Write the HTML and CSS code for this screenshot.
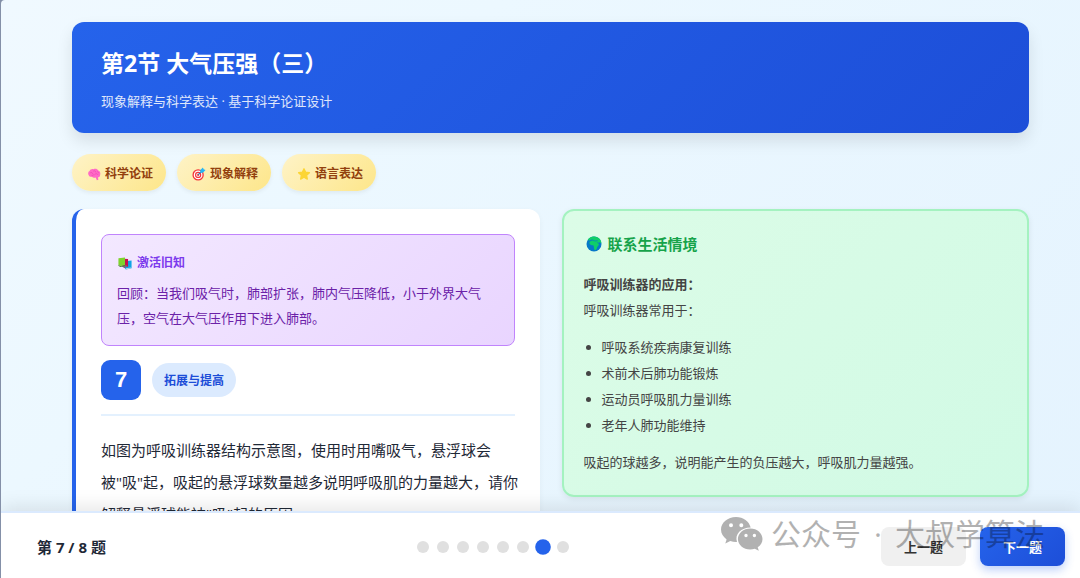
FILE: index.html
```html
<!DOCTYPE html>
<html lang="zh-CN">
<head>
<meta charset="utf-8">
<meta name="viewport" content="width=device-width, initial-scale=1">
<title>第2节 大气压强（三）</title>
<link rel="stylesheet" href="styles.css">
</head>
<body>
<div class="page">
  <main class="content">
    <header class="hero">
      <h1 class="hero-title">第2节 大气压强（三）</h1>
      <p class="hero-subtitle">现象解释与科学表达 · 基于科学论证设计</p>
    </header>

    <ul class="badges">
      <li class="badge">
        <svg class="icon icon-small" viewBox="0 0 16 16" aria-hidden="true">
          <path d="M2 9.500C.5 7.500 1.500 5 3 4.500 3.500 2.500 6 1.800 7.500 2.500 9.500 1.500 12 2.300 12.800 4 14.800 4.500 15.800 7 15 9c0 1.800-1.200 2.800-2.500 2.800l.5 2.700-1.700.5-1.500-3c-2 .8-3.300.3-4-.9-1.600.4-3.200-.1-3.800-1.600z" fill="#ff6ac6"/>
          <path d="M4 6.500c1.500-1 2.500.2 2.300 1.300M7.500 4.500c1.200-.6 2.300 0 2.500 1.200M9 8.500c1.200-1.400 2.900-1 3.500.2M5.500 10c1.200 0 2-.5 2.300-1.200M12 5.500l1.200 1" fill="none" stroke="#ee48b2" stroke-width=".8" stroke-linecap="round"/>
        </svg>
        科学论证
      </li>
      <li class="badge">
        <svg class="icon icon-small" viewBox="0 0 16 16" aria-hidden="true">
          <circle cx="7" cy="9" r="6.500" fill="#f5363c"/>
          <circle cx="7" cy="9" r="5" fill="#fff"/>
          <circle cx="7" cy="9" r="3.600" fill="#f5363c"/>
          <circle cx="7" cy="9" r="2.200" fill="#fff"/>
          <circle cx="7" cy="9" r="1.200" fill="#f5363c"/>
          <path d="M7 9l4-4" stroke="#2878b8" stroke-width="1.200"/>
          <path d="M9.500 6.500V3.500L12.500.5l.8 2.200 2.200.8-3 3z" fill="#26b5f5"/>
        </svg>
        现象解释
      </li>
      <li class="badge">
        <svg class="icon icon-small" viewBox="0 0 16 16" aria-hidden="true">
          <path d="M8 2l1.900 4 4.300.5-3.200 3 .8 4.300L8 11.700l-3.800 2.100.8-4.300-3.200-3L6.100 6z" fill="#fcd535" stroke="#fcd535" stroke-width="1.500" stroke-linejoin="round"/>
        </svg>
        语言表达
      </li>
    </ul>

    <div class="columns">
      <article class="question-card">
        <section class="review">
          <h2 class="review-title">
            <svg class="icon icon-small" viewBox="0 0 16 16" aria-hidden="true">
              <path d="M8 6l7.500-1v9L9 15.500 7 13z" fill="#0fa5e6"/>
              <path d="M9 14l6-1v1l-6 1.300z" fill="#b9d5e5"/>
              <path d="M6 3l5.500.5V12L7 13.300 5 11z" fill="#c50f4e"/>
              <path d="M4 11.500l6-.8.500 1.500L6 13z" fill="#736b80"/>
              <path d="M.5 2.500L8 1.800v8.700L2.500 11.500.5 10z" fill="#7ed32c"/>
              <path d="M.5 10l2 1.500L8 10.500v1l-5.500 1L.5 11z" fill="#477a30"/>
            </svg>
            激活旧知
          </h2>
          <p class="review-text">回顾：当我们吸气时，肺部扩张，肺内气压降低，小于外界大气压，空气在大气压作用下进入肺部。</p>
        </section>

        <div class="question-head">
          <span class="question-number">7</span>
          <span class="question-type">拓展与提高</span>
        </div>

        <p class="question-text">如图为呼吸训练器结构示意图，使用时用嘴吸气，悬浮球会<br>被"吸"起，吸起的悬浮球数量越多说明呼吸肌的力量越大，请你<br>解释悬浮球能被"吸"起的原因。</p>
      </article>

      <aside class="life-card">
        <h2 class="life-title">
          <svg class="icon icon-large" viewBox="0 0 16 16" aria-hidden="true">
            <circle cx="8" cy="8" r="7.500" fill="#0678c8"/>
            <path d="M3 2.300C6-.2 11-.3 14 3.200c1 1.400 1.300 2.600 1.400 4.300l-1.600-1.200-1.500.8.700 1.500c-.5 1.500-1.900 2-2.100 3.600-.4 1.400-1.500 2.200-2.400 1.500-.9-1.500-.2-3-1.200-4.500-1.800.2-3.500-.3-3.800-2C3.300 5.600 5 4.700 6.500 4.500l1-.8-2-.3L4 4.500 1.700 4z" fill="#0fce68"/>
            <path d="M6.800 4.400l2.300.6 2.600-.3M11.500 6l1 1.700" fill="none" stroke="#0678c8" stroke-width=".7"/>
          </svg>
          联系生活情境
        </h2>
        <div class="life-body">
          <p><strong>呼吸训练器的应用：</strong></p>
          <p>呼吸训练器常用于：</p>
          <ul class="life-list">
            <li>呼吸系统疾病康复训练</li>
            <li>术前术后肺功能锻炼</li>
            <li>运动员呼吸肌力量训练</li>
            <li>老年人肺功能维持</li>
          </ul>
          <p>吸起的球越多，说明能产生的负压越大，呼吸肌力量越强。</p>
        </div>
      </aside>
    </div>
  </main>

  <footer class="pager">
    <span class="pager-count">第 7 / 8 题</span>
    <div class="dots">
      <span class="dot"></span>
      <span class="dot"></span>
      <span class="dot"></span>
      <span class="dot"></span>
      <span class="dot"></span>
      <span class="dot"></span>
      <span class="dot dot-active"></span>
      <span class="dot"></span>
    </div>
    <div class="pager-actions">
      <button class="btn btn-prev" type="button">上一题</button>
      <button class="btn btn-next" type="button">下一题</button>
    </div>
    <div class="watermark">
      <svg class="watermark-logo" viewBox="0 0 42 34" aria-hidden="true">
        <path fill-rule="evenodd" d="M15 0C6.700 0 0 5.600 0 12.600c0 4 2.200 7.500 5.600 9.800L4.300 26.600l5-2.500c1.800.6 3.700 1 5.700 1h1C13.500 17 20 10.700 29.700 10.600 28.300 4.500 22.300 0 15 0zM10 6.300a2 2 0 1 1 0 4 2 2 0 0 1 0-4zM20.300 6.300a2 2 0 1 1 0 4 2 2 0 0 1 0-4z"/>
        <path fill-rule="evenodd" d="M29.300 11.500c-6.900 0-12.400 4.700-12.400 10.500s5.500 10.500 12.400 10.500c1.600 0 3.100-.3 4.500-.7l4 2-1.100-3.500c2.900-1.900 4.800-4.900 4.800-8.300 0-5.800-5.400-10.500-12.200-10.500zM25 16.800a1.700 1.700 0 1 1 0 3.400 1.700 1.700 0 0 1 0-3.400zM33.400 16.800a1.700 1.700 0 1 1 0 3.400 1.700 1.700 0 0 1 0-3.400z"/>
      </svg>
      <span class="watermark-name">
        <span>公众号</span>
        <span>·</span>
        <span>大叔学算法</span>
      </span>
    </div>
  </footer>
</div>
</body>
</html>
```

FILE: styles.css
```css
* {
  box-sizing: border-box;
}

body {
  margin: 0;
  background: #8490a8;
  color: #1f2937;
  font-family: "Open Sans", "Noto Sans CJK SC", sans-serif;
  font-size: 13px;
}

h1,
h2,
p,
ul {
  margin: 0;
  padding: 0;
}

.page {
  display: grid;
  grid-template-rows: minmax(0, 1fr) auto;
  height: 100vh;
  margin-left: 1px;
  overflow: hidden;
  border-top-left-radius: 4px;
  background: linear-gradient(135deg, #f0f9ff 0%, #ecf8ff 30%, #e4f3fe 100%);
}

.content {
  padding: 22px 51px 0 71px;
  overflow: hidden;
}

.hero {
  padding: 23px 28px 21px 29px;
  border-radius: 12px;
  background: linear-gradient(135deg, #2563eb, #1d4ed8);
  box-shadow: 0 8px 16px rgba(0, 0, 0, 0.1);
  color: #fff;
}

.hero-title {
  margin-bottom: 9px;
  font-size: 23px;
  font-weight: 700;
  line-height: 36px;
}

.hero-subtitle {
  line-height: 22px;
  opacity: 0.85;
}

.badges {
  display: flex;
  gap: 11px;
  margin: 21px 0 18px;
  list-style: none;
}

.badge {
  display: flex;
  align-items: center;
  gap: 4px;
  padding: 9px 13px 7px 15px;
  border-radius: 19px;
  background: linear-gradient(135deg, #fef3c7, #fde68a);
  box-shadow: 0 2px 4px rgba(0, 0, 0, 0.06);
  color: #92400e;
  font-size: 12px;
  font-weight: 700;
  line-height: 21px;
}

.icon {
  flex: none;
}

.icon-small {
  width: 14px;
  height: 14px;
}

.icon-large {
  width: 16px;
  height: 16px;
}

.columns {
  display: grid;
  grid-template-columns: 1fr 1fr;
  align-items: start;
  gap: 22px;
}

.question-card {
  min-width: 0;
  padding: 25px;
  border-left: 4px solid #2563eb;
  border-radius: 12px;
  background: #fff;
  box-shadow: 0 2px 6px rgba(0, 0, 0, 0.04);
}

.review {
  padding: 16px 15px 14px;
  border: 1px solid #c084fc;
  border-radius: 8px;
  background: linear-gradient(135deg, #f3e8ff, #e9d5ff);
}

.review-title {
  display: flex;
  align-items: center;
  gap: 5px;
  margin: 0 0 6px 1px;
  color: #7c3aed;
  font-size: 12px;
  line-height: 24px;
}

.review-text {
  color: #6b21a8;
  line-height: 25px;
}

.question-head {
  display: flex;
  align-items: center;
  gap: 11px;
  margin: 14px 0 18px;
  padding-bottom: 14px;
  border-bottom: 2px solid #e4f1fe;
}

.question-number {
  width: 40px;
  border-radius: 9px;
  background: #2563eb;
  color: #fff;
  font-family: "Liberation Sans", sans-serif;
  font-size: 22px;
  font-weight: 700;
  line-height: 40px;
  text-align: center;
}

.question-type {
  padding: 7px 12px 5px;
  border-radius: 17px;
  background: #dbeafe;
  color: #1d4ed8;
  font-size: 12px;
  font-weight: 700;
  line-height: 22px;
}

.question-text {
  font-size: 15px;
  line-height: 32px;
  white-space: nowrap;
}

.life-card {
  padding: 20px;
  border: 2px solid #a4f2c0;
  border-radius: 12px;
  background: linear-gradient(135deg, #dcfce7, #d1fae5);
  box-shadow: 0 2px 6px rgba(0, 0, 0, 0.08);
}

.life-title {
  display: flex;
  align-items: center;
  gap: 6px;
  margin: 0 0 14px 2px;
  color: #16a34a;
  font-size: 15px;
  line-height: 26px;
}

.life-body {
  color: #444;
  line-height: 26px;
}

.life-list {
  margin: 11px 0;
  padding-left: 18px;
}

.pager {
  position: relative;
  display: flex;
  align-items: center;
  justify-content: space-between;
  padding: 14px 15px 12px 36px;
  border-top: 2px solid #dbeafe;
  background: #fff;
  box-shadow: 0 -4px 18px rgba(0, 0, 0, 0.1);
}

.pager-count {
  font-size: 15px;
  font-weight: 700;
}

.dots {
  display: flex;
  align-items: center;
  gap: 8px;
}

.dot {
  width: 12px;
  height: 12px;
  border-radius: 50%;
  background: #e0e0e0;
}

.dot-active {
  background: #2563eb;
  transform: scale(1.3);
}

.pager-actions {
  display: flex;
  gap: 14px;
}

.btn {
  padding: 9px 23px 7px;
  border: 0;
  border-radius: 8px;
  font: inherit;
  font-weight: 700;
  line-height: 23px;
}

.btn-prev {
  background: #f0f0f0;
  color: #333;
}

.btn-next {
  background: linear-gradient(135deg, #2563eb, #1d4ed8);
  box-shadow: 0 4px 10px rgba(37, 99, 235, 0.3);
  color: #fff;
}

/* Account mark laid over the pager */
.watermark {
  position: absolute;
  top: 0;
  right: 35px;
  display: flex;
  align-items: center;
  gap: 8px;
  color: #000;
  font-size: 30px;
  font-weight: 400;
  line-height: 42px;
  opacity: 0.3;
  pointer-events: none;
}

.watermark-name {
  display: flex;
  gap: 13px;
}

.watermark-logo {
  width: 42px;
  height: 34px;
  fill: currentColor;
}
```
